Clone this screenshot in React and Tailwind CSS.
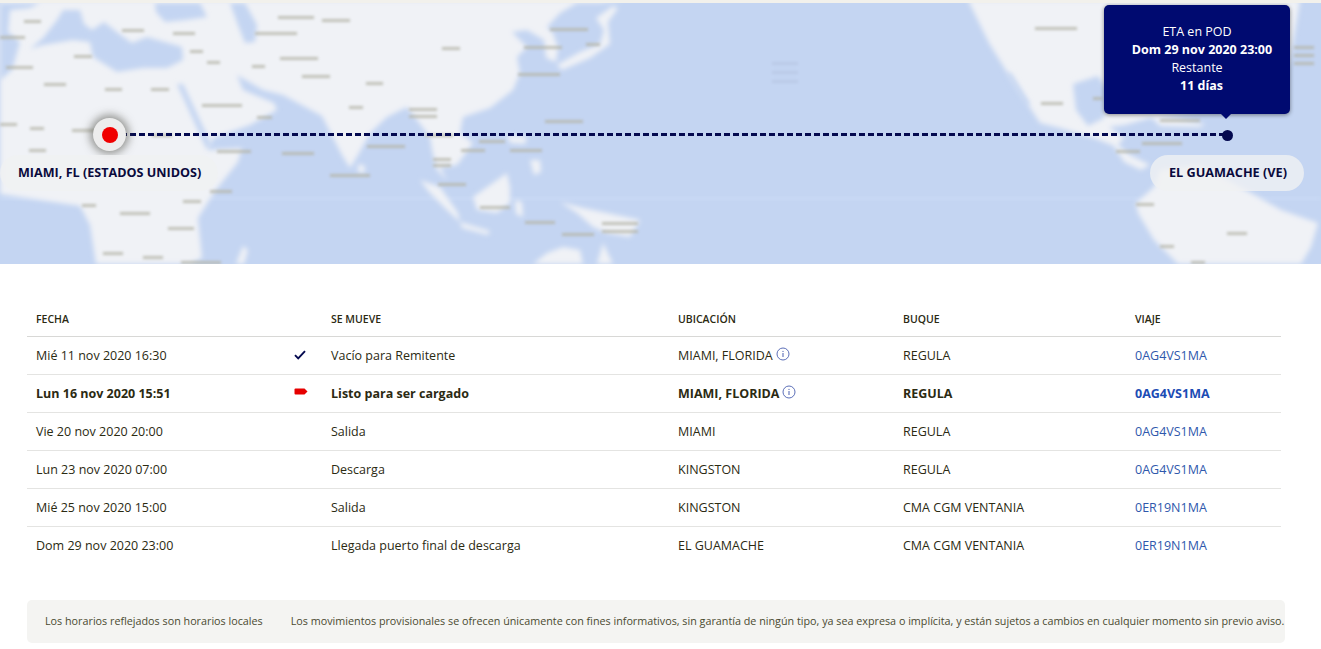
const FONT = "font-['Open_Sans',sans-serif]";

const rows = [
  { date: "Mié 11 nov 2020 16:30", icon: "check", move: "Vacío para Remitente", place: "MIAMI, FLORIDA", info: true, ship: "REGULA", trip: "0AG4VS1MA" },
  { date: "Lun 16 nov 2020 15:51", icon: "flag", move: "Listo para ser cargado", place: "MIAMI, FLORIDA", info: true, ship: "REGULA", trip: "0AG4VS1MA", current: true },
  { date: "Vie 20 nov 2020 20:00", move: "Salida", place: "MIAMI", ship: "REGULA", trip: "0AG4VS1MA" },
  { date: "Lun 23 nov 2020 07:00", move: "Descarga", place: "KINGSTON", ship: "REGULA", trip: "0AG4VS1MA" },
  { date: "Mié 25 nov 2020 15:00", move: "Salida", place: "KINGSTON", ship: "CMA CGM VENTANIA", trip: "0ER19N1MA" },
  { date: "Dom 29 nov 2020 23:00", move: "Llegada puerto final de descarga", place: "EL GUAMACHE", ship: "CMA CGM VENTANIA", trip: "0ER19N1MA" },
];

// blurred place names on the base map
const smudges = [
  [24,20,17,3],[0,36,25,3],[6,66,27,3],[44,83,22,3],[105,88,17,3],[151,88,18,3],[74,55,18,3],[122,29,22,3],[173,32,22,3],
  [190,50,13,3],[207,61,13,3],[252,65,13,3],[278,16,36,3],[322,19,28,3],[255,32,42,3],[280,57,38,3],[302,75,28,3],[366,82,17,3],
  [442,47,18,3],[524,46,38,3],[550,28,38,3],[586,43,14,3],[518,73,42,3],[202,104,40,3],[257,116,15,3],[349,106,14,3],
  [409,108,28,3],[409,115,28,3],
  [545,120,38,3],[0,123,17,3],[30,127,14,3],[72,129,24,3],[152,134,20,3],[29,149,17,3],[217,150,34,3],[282,152,32,3],[367,145,38,3],
  [425,134,28,3],[461,149,24,3],[479,140,26,3],[510,149,32,3],[433,158,18,3],[433,164,18,3],[330,174,40,3],[438,183,28,3],[480,206,30,3],[82,204,14,3],
  [120,212,30,3],[183,200,18,3],[168,227,26,3],[210,190,22,3],[103,252,20,3],[143,256,20,3],[181,261,40,3],[525,221,30,3],[562,233,32,3],
  [602,222,36,3],[602,230,36,3],[1035,27,42,3],[1041,102,22,3],[1093,97,9,3],[1142,142,40,3],[1116,150,24,3],[1136,203,18,3],
  [1227,232,20,3],[1160,245,14,3],[1191,261,14,3],[1294,46,20,3],[1294,54,20,3],[1294,62,20,3],[1160,119,40,3],
];

// faint grid of tiny names out in the Pacific
const faint = [[772,62,26,3],[772,71,26,3],[772,80,26,3]];

const land = [
  // Eurasia and Africa
  "M0 0 L625 0 L600 3 L577 3 L560 13 L547 27 L553 33 L558 48 L556 62 L546 58 L544 40 L527 30 L512 32 L527 47 L517 57 L520 73 L513 90 L490 108 L463 117 L460 133 L473 143 L457 165 L440 167 L447 180 L437 170 L432 150 L430 137 L407 107 L387 117 L370 133 L358 155 L350 168 L342 155 L322 116 L283 95 L263 90 L237 75 L243 90 L274 103 L277 110 L250 125 L213 138 L207 150 L242 148 L238 162 L215 191 L198 218 L202 258 L190 264 L96 264 L90 225 L80 206 L40 200 L0 194 Z",
  // Sri Lanka, Sumatra, Java, Borneo, Sulawesi
  "M358 164 L365 166 L364 174 L358 172 Z",
  "M420 180 L440 187 L458 213 L460 222 L447 210 L430 193 Z",
  "M460 222 L490 231 L488 235 L462 228 Z",
  "M507 173 L510 187 L510 203 L497 213 L477 210 L473 197 Z",
  "M515 200 L522 202 L523 217 L516 214 Z",
  // Philippines
  "M507 135 L527 137 L525 144 L510 143 Z",
  "M530 160 L540 160 L541 172 L534 175 Z",
  // New Guinea and Australia
  "M560 202 L583 208 L607 213 L640 220 L630 237 L607 233 L593 227 L577 213 Z",
  "M533 264 L547 253 L563 247 L580 250 L583 264 Z",
  "M597 264 L603 243 L613 264 Z",
  "M236 264 L243 246 L248 250 L244 264 Z",
  // Japan
  "M557 65 L580 52 L600 44 L604 30 L596 18 L613 6 L618 8 L608 22 L610 44 L590 58 L562 70 Z",
  // North and Central America
  "M968 0 L1300 0 L1290 60 L1270 108 L1200 112 L1150 118 L1125 125 L1109 127 L1124 138 L1118 145 L1130 155 L1150 165 L1141 170 L1124 162 L1114 146 L1094 138 L1060 128 L1040 123 L1010 77 L989 43 Z",
  // South America
  "M1138 213 L1136 203 L1154 187 L1160 170 L1200 165 L1251 193 L1281 210 L1318 223 L1311 247 L1301 264 L1178 264 L1154 240 Z",
  // Cuba
  "M1151 117 L1178 119 L1205 124 L1200 127 L1160 126 Z",
];

const sea = [
  // Atlantic off Iberia
  "M0 3 L40 3 L30 8 L10 10 L8 32 L20 42 L12 70 L0 80 Z",
  // Mediterranean, Black Sea, Caspian
  "M30 49 L43 38 L57 20 L63 10 L80 10 L84 24 L92 30 L104 22 L118 33 L132 43 L147 37 L182 47 L183 60 L167 68 L143 68 L117 72 L93 57 L90 42 L73 40 L43 45 Z",
  "M155 3 L200 3 L207 17 L185 20 L165 22 L156 12 Z",
  "M230 3 L245 3 L257 25 L255 42 L245 43 L238 25 Z",
  // Red Sea
  "M177 84 L183 84 L212 146 L206 148 Z",
  // Gulf of California and Gulf of Mexico
  "M1006 73 L1011 73 L1030 104 L1026 106 Z",
  "M1073 84 L1098 76 L1108 90 L1104 118 L1088 126 L1076 110 Z",
];

function BaseMap() {
  return (
    <svg width="1321" height="261" viewBox="0 3 1321 261" className="block">
      <defs>
        <filter id="soft" x="-5%" y="-5%" width="110%" height="110%">
          <feGaussianBlur stdDeviation="2.4" />
        </filter>
        <filter id="dab" x="-5%" y="-5%" width="110%" height="110%">
          <feGaussianBlur stdDeviation="1.7" />
        </filter>
      </defs>
      <rect x="0" y="3" width="1321" height="261" fill="#c4d5f2" />
      <rect x="0" y="197" width="1321" height="3" fill="#cbdbf6" filter="url(#soft)" />
      <g fill="#f0f2f6" filter="url(#soft)">
        {land.map((d) => (
          <path key={d} d={d} />
        ))}
      </g>
      <g fill="#c4d5f2" filter="url(#soft)">
        {sea.map((d) => (
          <path key={d} d={d} />
        ))}
      </g>
      <g fill="#b4b4a8" filter="url(#dab)" opacity="0.8">
        {smudges.map(([x, y, w, h], i) => (
          <rect key={i} x={x} y={y} width={w} height={h} />
        ))}
      </g>
      <g fill="#aebcd8" filter="url(#dab)" opacity="0.45">
        {faint.map(([x, y, w, h], i) => (
          <rect key={i} x={x} y={y} width={w} height={h} />
        ))}
      </g>
    </svg>
  );
}

function InfoIcon() {
  return (
    <svg width="14" height="14" viewBox="0 0 14 14" fill="none" className="inline-block ml-[3px] -mt-[5px] align-middle">
      <circle cx="7" cy="7" r="6" stroke="#4a5fb0" strokeWidth="0.9" />
      <rect x="6.5" y="6" width="1" height="4" fill="#4a5fb0" />
      <rect x="6.5" y="3.9" width="1" height="1.1" fill="#4a5fb0" />
    </svg>
  );
}

function StatusIcon({ kind }) {
  if (kind === "check") {
    return (
      <svg width="12" height="10" viewBox="0 0 12 10" fill="none" className="block">
        <path d="M1 5.2 L4.2 8.4 L11 1.2" stroke="#04094f" strokeWidth="1.9" />
      </svg>
    );
  }
  if (kind === "flag") {
    return (
      <svg width="14" height="8" viewBox="0 0 14 8" className="block -mt-[2px]">
        <path d="M1.5 0.5 L10.5 0.5 L13.5 3.5 L10.5 6.5 L1.5 6.5 Q0.5 6.5 0.5 5.5 L0.5 1.5 Q0.5 0.5 1.5 0.5 Z" fill="#e60000" />
      </svg>
    );
  }
  return null;
}

function Row({ row }) {
  const weight = row.current ? "font-bold" : "font-normal";
  return (
    <tr className={`h-[38px] border-b border-[#e4e4e2] last:border-b-0 text-[12.5px] text-[#2b2a12] ${weight}`}>
      <td className="pl-[9px] pt-[2px]">{row.date}</td>
      <td>
        <StatusIcon kind={row.icon} />
      </td>
      <td className="pt-[2px]">{row.move}</td>
      <td className="pt-[2px]">
        {row.place}
        {row.info && <InfoIcon />}
      </td>
      <td className="pt-[2px]">{row.ship}</td>
      <td className={`pt-[2px] ${row.current ? "text-[#1c4cb4]" : "text-[#2f58ac]"}`}>{row.trip}</td>
    </tr>
  );
}

export default function App() {
  return (
    <div className={`${FONT} w-[1321px] h-[649px] overflow-hidden bg-white`}>
      <div className="h-[3px] bg-[#f2f1ec]" />
      <div className="relative h-[261px] overflow-hidden">
        <BaseMap />

        {/* route line */}
        <div className="absolute left-[121px] top-[130px] w-[1102px] h-[3px] bg-[repeating-linear-gradient(90deg,#04094f_0,#04094f_6px,transparent_6px,transparent_9px)]" />

        {/* origin */}
        <div className="absolute left-[93px] top-[115px] w-[33px] h-[33px] rounded-full bg-[#ededed] shadow-[0_0_8px_3px_rgba(70,70,60,0.55)] flex items-center justify-center">
          <div className="w-[16px] h-[16px] rounded-full bg-[#f00000]" />
        </div>
        <div className="absolute left-0 top-[152px] h-[36px] w-[218px] rounded-[18px] bg-[#f0f1f3]/80 flex items-center pl-[18px] text-[12.6px] font-bold text-[#0a0a3c]">
          MIAMI, FL (ESTADOS UNIDOS)
        </div>

        {/* destination */}
        <div className="absolute left-[1222px] top-[127px] w-[11px] h-[11px] rounded-full bg-[#04094f]" />
        <div className="absolute left-[1150px] top-[152px] h-[36px] w-[154px] rounded-[18px] bg-[#f0f1f3]/80 flex items-center justify-center pl-[2px] text-[12.7px] font-bold text-[#0a0a3c]">
          EL GUAMACHE (VE)
        </div>

        {/* ETA tooltip */}
        <div className="absolute left-[1104px] top-[2px] w-[186px] h-[109px] rounded-[5px] bg-[#000a70] shadow-[0_1px_4px_rgba(0,0,0,0.45)] pt-[18px] text-center text-[12.5px] leading-[18px] text-white">
          <div>ETA en POD</div>
          <div className="font-bold pl-[10px]">Dom 29 nov 2020 23:00</div>
          <div>Restante</div>
          <div className="font-bold pl-[9px]">11 días</div>
          <div className="absolute left-[117px] top-[109px] w-0 h-0 border-x-[5px] border-x-transparent border-t-[5px] border-t-[#000a70]" />
        </div>
      </div>

      <div className="pl-[27px] pr-[40px] pt-[36px]">
        <table className="w-[1254px] table-fixed border-collapse">
          <thead>
            <tr className="h-[36px] border-b border-[#d8d8d6] text-left text-[10.5px] text-[#2b2a12]">
              <th className="w-[267px] pl-[9px] pt-[4px] font-semibold">FECHA</th>
              <th className="w-[37px]"></th>
              <th className="w-[347px] pt-[4px] font-semibold">SE MUEVE</th>
              <th className="w-[225px] pt-[4px] font-semibold">UBICACIÓN</th>
              <th className="w-[232px] pt-[4px] font-semibold">BUQUE</th>
              <th className="pt-[4px] font-semibold">VIAJE</th>
            </tr>
          </thead>
          <tbody>
            {rows.map((row) => (
              <Row key={row.date} row={row} />
            ))}
          </tbody>
        </table>

        <div className="mt-[36px] w-[1258px] h-[43px] rounded-[5px] bg-[#f4f4f2] flex items-center pl-[18px] text-[10.78px] whitespace-nowrap text-[#4a4a30]">
          <span>Los horarios reflejados son horarios locales</span>
          <span className="ml-[28px]">
            Los movimientos provisionales se ofrecen únicamente con fines informativos, sin garantía de ningún tipo, ya sea expresa o implícita, y están sujetos a cambios en cualquier momento sin previo aviso.
          </span>
        </div>
      </div>
    </div>
  );
}
